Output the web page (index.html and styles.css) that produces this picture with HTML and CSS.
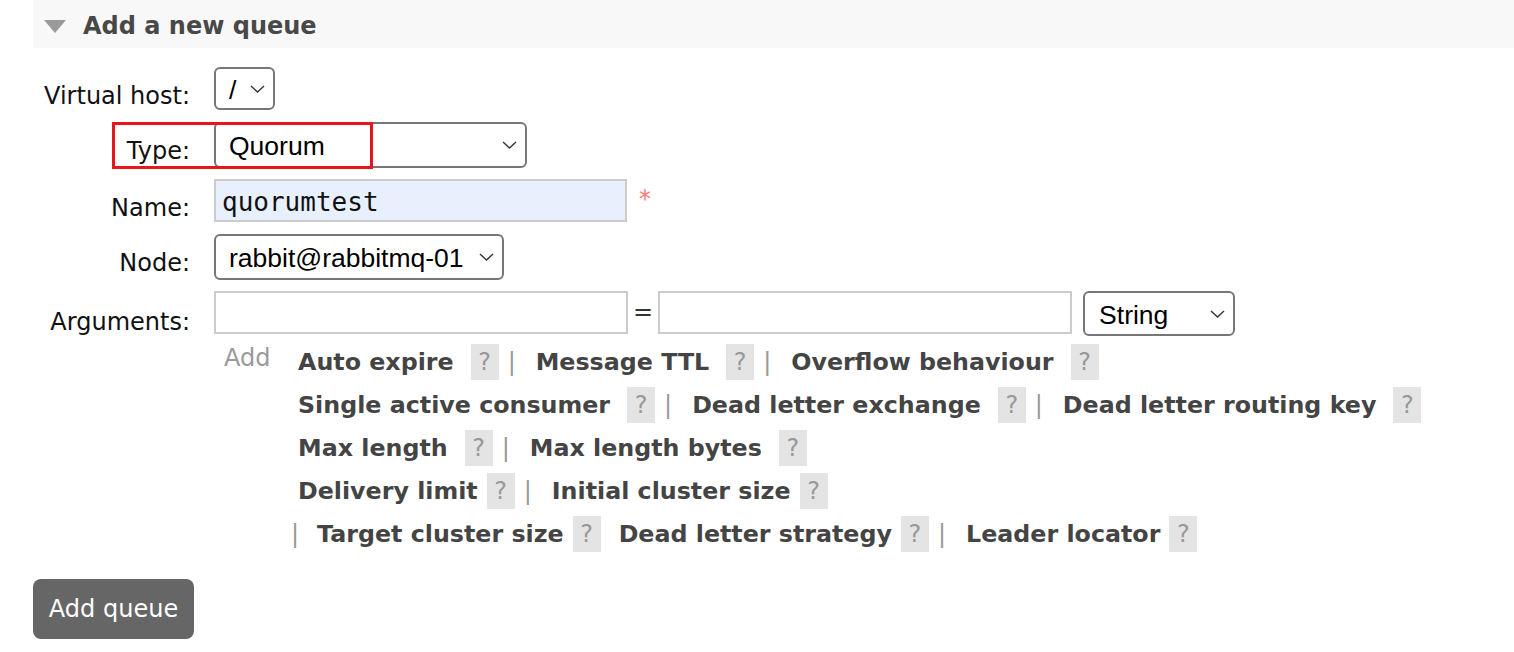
FILE: index.html
```html
<!DOCTYPE html>
<html lang="en">
<head>
<meta charset="utf-8">
<title>Add a new queue</title>
<link rel="stylesheet" href="styles.css">
</head>
<body>
<div class="page">
  <div class="section-head">
    <span class="tri"></span>
    <h2>Add a new queue</h2>
  </div>

  <div class="form">
    <label class="lbl">Virtual host:</label>
    <div class="field">
      <div class="select sel-vhost"><span>/</span><svg class="chev" viewBox="0 0 15 8"><path d="M1 1 L7.5 7 L14 1" fill="none" stroke="#333" stroke-width="1.4"/></svg></div>
    </div>

    <label class="lbl">Type:</label>
    <div class="field">
      <div class="select sel-type"><span>Quorum</span><svg class="chev" viewBox="0 0 15 8"><path d="M1 1 L7.5 7 L14 1" fill="none" stroke="#333" stroke-width="1.4"/></svg></div>
    </div>

    <label class="lbl">Name:</label>
    <div class="field field-row">
      <input class="text name" type="text" value="quorumtest">
      <span class="mand">*</span>
    </div>

    <label class="lbl">Node:</label>
    <div class="field">
      <div class="select sel-node"><span>rabbit@rabbitmq-01</span><svg class="chev" viewBox="0 0 15 8"><path d="M1 1 L7.5 7 L14 1" fill="none" stroke="#333" stroke-width="1.4"/></svg></div>
    </div>

    <label class="lbl lbl-args">Arguments:</label>
    <div class="field">
      <div class="args">
        <input class="text arg" type="text">
        <span class="eq">=</span>
        <input class="text arg" type="text">
        <div class="select sel-string"><span>String</span><svg class="chev" viewBox="0 0 15 8"><path d="M1 1 L7.5 7 L14 1" fill="none" stroke="#333" stroke-width="1.4"/></svg></div>
      </div>
      <div class="add-row">
        <span class="add">Add</span>
        <div class="links">
          <div class="line">
            <span class="lnk">Auto expire</span><span class="help">?</span><span class="sep">|</span>
            <span class="lnk">Message TTL</span><span class="help">?</span><span class="sep">|</span>
            <span class="lnk">Overflow behaviour</span><span class="help">?</span>
          </div>
          <div class="line">
            <span class="lnk">Single active consumer</span><span class="help">?</span><span class="sep">|</span>
            <span class="lnk">Dead letter exchange</span><span class="help">?</span><span class="sep">|</span>
            <span class="lnk">Dead letter routing key</span><span class="help">?</span>
          </div>
          <div class="line">
            <span class="lnk">Max length</span><span class="help">?</span><span class="sep">|</span>
            <span class="lnk">Max length bytes</span><span class="help">?</span>
          </div>
          <div class="line tight">
            <span class="lnk">Delivery limit</span><span class="help">?</span><span class="sep">|</span>
            <span class="lnk">Initial cluster size</span><span class="help">?</span>
          </div>
          <div class="line tight">
            <span class="sep lead">|</span>
            <span class="lnk">Target cluster size</span><span class="help">?</span>
            <span class="lnk spaced">Dead letter strategy</span><span class="help">?</span><span class="sep">|</span>
            <span class="lnk">Leader locator</span><span class="help">?</span>
          </div>
        </div>
      </div>
    </div>

    <div class="highlight"></div>
  </div>

  <button class="btn" type="button">Add queue</button>
</div>
</body>
</html>
```

FILE: styles.css
```css
html, body {
  margin: 0;
  padding: 0;
  background: #fff;
}

body {
  font-family: "DejaVu Sans", Verdana, sans-serif;
  font-size: 24px;
  color: #111;
}

.page {
  padding-left: 33px;
}

.section-head {
  height: 48px;
  box-sizing: border-box;
  padding-top: 3px;
  background: #f8f8f8;
  display: flex;
  align-items: center;
  padding-left: 11px;
}

.tri {
  width: 0;
  height: 0;
  border-left: 11.5px solid transparent;
  border-right: 11.5px solid transparent;
  border-top: 13px solid #9a9a9a;
  margin-right: 17px;
  margin-top: 2px;
}

.section-head h2 {
  margin: 0;
  font-size: 24px;
  font-weight: bold;
  color: #484848;
  line-height: 28px;
}

.form {
  position: relative;
  display: grid;
  grid-template-columns: 157px auto;
  column-gap: 24px;
  row-gap: 11.5px;
  margin-top: 19px;
  align-items: start;
  justify-items: start;
}

.lbl {
  justify-self: end;
  padding-top: 15px;
  line-height: 28px;
  color: #111;
}

.lbl-args {
  padding-top: 17px;
}

.field-row {
  display: flex;
  align-items: flex-start;
}

.select {
  display: flex;
  align-items: center;
  justify-content: space-between;
  box-sizing: border-box;
  border: 2px solid #777;
  border-radius: 6px;
  background: #fff;
  font-family: "Liberation Sans", Arial, sans-serif;
  font-size: 26.5px;
  color: #000;
  padding: 3px 8px 0 13px;
}

.chev {
  width: 15px;
  height: 8px;
  flex: none;
  margin-top: -3px;
}

.sel-vhost {
  width: 61px;
  height: 43px;
}

.sel-type {
  width: 313px;
  height: 46px;
}

.sel-node {
  width: 290px;
  height: 46px;
}

.sel-string {
  width: 152px;
  height: 45px;
  padding-left: 14px;
}

.text {
  box-sizing: border-box;
  height: 43px;
  margin: 0;
  border: 2px solid #ccc;
  background: #fff;
  font-family: "DejaVu Sans Mono", monospace;
  font-size: 26px;
  color: #111;
  padding: 3px 6px 0;
  outline: none;
}

.name {
  width: 413px;
  background: #e8f0fe;
}

.mand {
  color: #f77;
  margin-left: 12px;
  margin-top: 6px;
  line-height: 28px;
}

.args {
  display: flex;
  align-items: flex-start;
}

.arg {
  width: 414px;
  height: 43px;
}

.eq {
  margin: 0 5px;
  line-height: 42px;
  color: #333;
}

.sel-string {
  margin-left: 11px;
}

.add-row {
  display: flex;
  align-items: flex-start;
  margin-top: 4px;
}

.add {
  width: 74px;
  padding-left: 10px;
  padding-top: 4px;
  line-height: 28px;
  color: #999;
  flex: none;
}

.links {
  display: flex;
  flex-direction: column;
}

.line {
  display: flex;
  align-items: center;
  height: 43px;
  white-space: nowrap;
}

.lnk {
  font-weight: bold;
  font-size: 23.75px;
  color: #444;
}

.help {
  width: 28px;
  height: 36px;
  background: #e4e4e4;
  color: #999;
  display: flex;
  align-items: center;
  justify-content: center;
  margin-left: 17px;
  flex: none;
}

.line.tight .help {
  margin-left: 9px;
}

.sep {
  color: #999;
  margin: 0 20px 0 9px;
}

.sep.lead {
  margin-left: -7px;
  margin-right: 18px;
}

.lnk.spaced {
  margin-left: 18px;
}

.highlight {
  position: absolute;
  left: 79px;
  top: 55px;
  width: 261px;
  height: 47px;
  border: 3px solid #e8161b;
  box-sizing: border-box;
  pointer-events: none;
}

.btn {
  display: block;
  margin-top: 24px;
  width: 161px;
  height: 60px;
  padding: 0;
  border: none;
  border-radius: 8px;
  background: #666;
  color: #fff;
  font-family: "DejaVu Sans", Verdana, sans-serif;
  font-size: 24px;
}
```
